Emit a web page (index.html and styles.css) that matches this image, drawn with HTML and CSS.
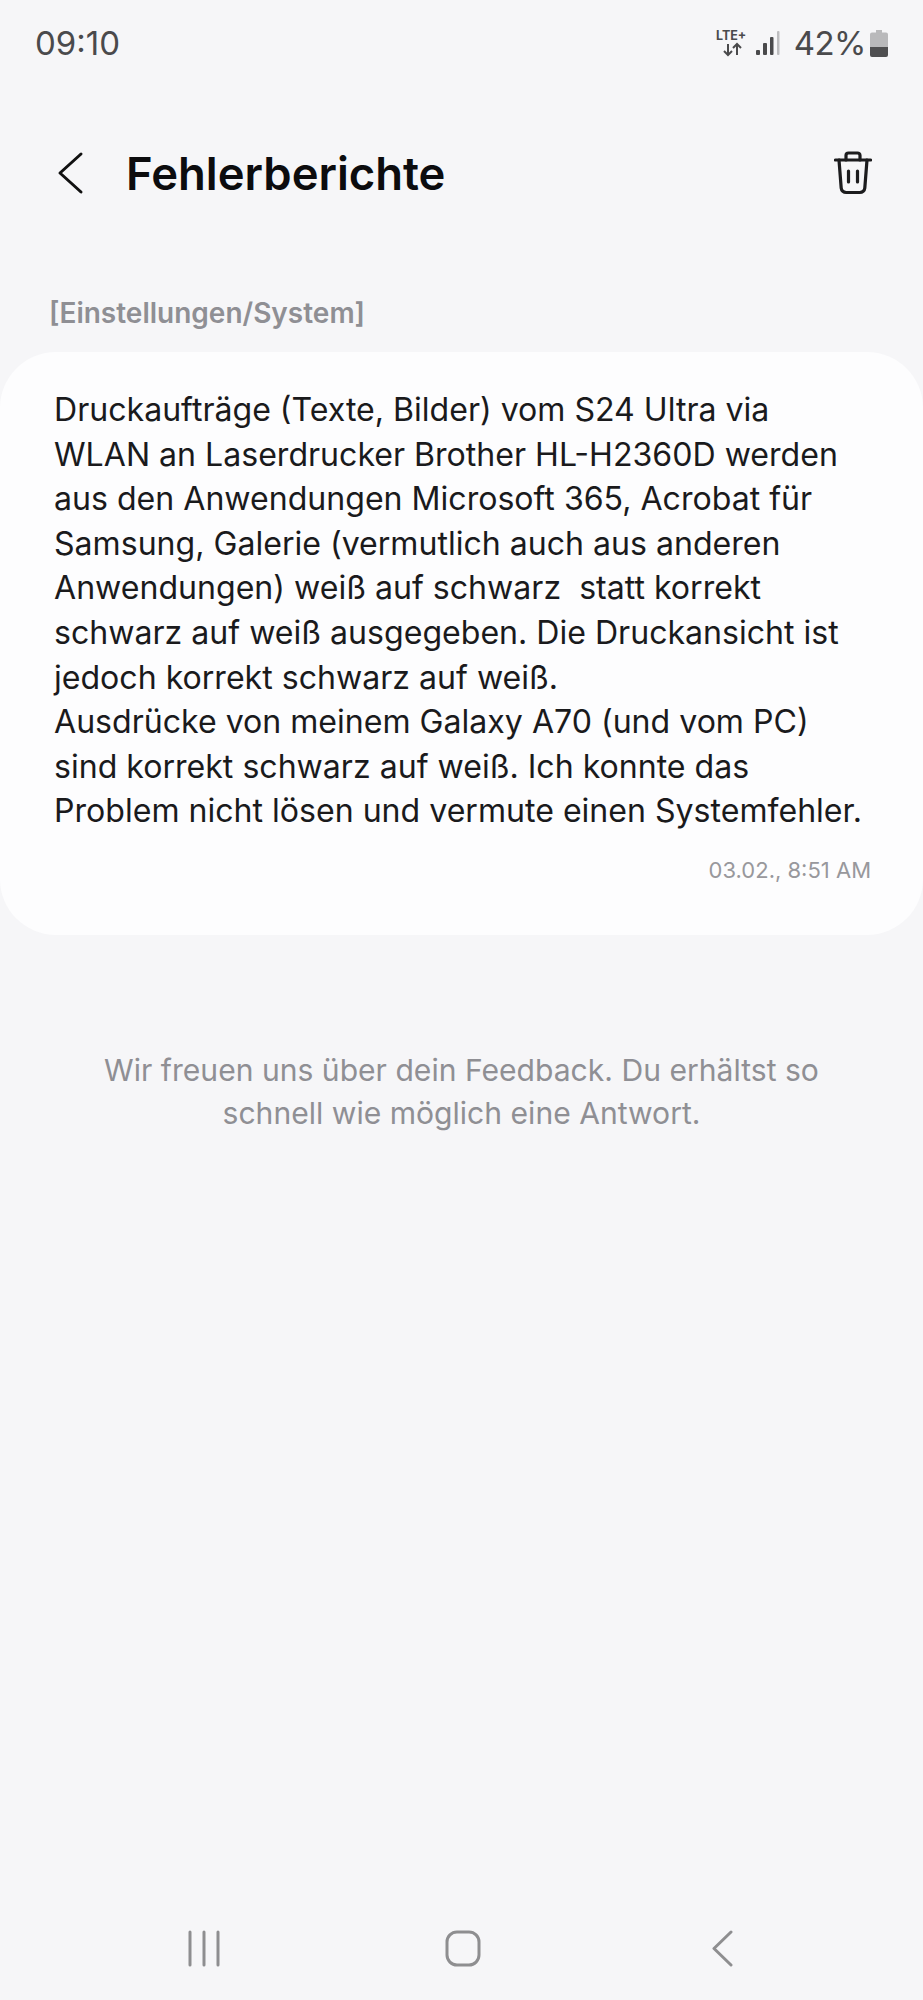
FILE: index.html
```html
<!DOCTYPE html>
<html>
<head>
<link rel="stylesheet" href="styles.css">
</head>
<body>

<div class="screen">
  <div class="status-bar">
    <span class="clock">09:10</span>
    <div class="status-icons">
      <svg class="icon-lte" width="36" height="28" viewBox="0 0 36 28">
        <text x="0" y="11" class="lte-text">LTE+</text>
        <path d="M12 15v11M8 22l4 4 4-4M21 26V15M17 19l4-4 4 4" fill="none" stroke="#4a4a4c" stroke-width="2"/>
      </svg>
      <svg class="icon-signal" width="24" height="25" viewBox="0 0 24 25">
        <rect x="0" y="19" width="4" height="5" rx="1" fill="#4a4a4c"/>
        <rect x="7" y="12" width="4" height="12" rx="1" fill="#4a4a4c"/>
        <rect x="14" y="6" width="3.500" height="18" rx="1" fill="#4a4a4c"/>
        <rect x="21" y="0" width="2.500" height="24" rx="1" fill="#bdbdbf"/>
      </svg>
      <span class="battery-text">42%</span>
      <svg class="icon-battery" width="18" height="27" viewBox="0 0 18 27">
        <path d="M6 0h6v2.500h4a2 2 0 0 1 2 2V17H0V4.500a2 2 0 0 1 2-2h4z" fill="#b9b9bb"/>
        <path d="M0 17h18v8a2 2 0 0 1-2 2H2a2 2 0 0 1-2-2z" fill="#4f4f51"/>
      </svg>
    </div>
  </div>

  <div class="app-bar">
    <svg class="back" width="28" height="44" viewBox="0 0 28 44">
      <path d="M24 3L3 22l21 19" fill="none" stroke="#111" stroke-width="3" stroke-linecap="round" stroke-linejoin="round"/>
    </svg>
    <h1 class="title">Fehlerberichte</h1>
    <svg class="trash" width="38" height="44" viewBox="0 0 38 44">
      <g fill="none" stroke="#1c1c1e" stroke-width="3.200" stroke-linecap="round" stroke-linejoin="round">
        <path d="M1.500 9h35"/>
        <path d="M12 9V4.500a2.500 2.500 0 0 1 2.500-2.500h9a2.500 2.500 0 0 1 2.500 2.500V9"/>
        <path d="M5 9l2.200 28a5 5 0 0 0 5 4.500h13.600a5 5 0 0 0 5-4.500L33 9"/>
        <path d="M14.500 20v11M23.500 20v11"/>
      </g>
    </svg>
  </div>

  <div class="category">[Einstellungen/System]</div>

  <div class="card">
    <p class="message">Druckaufträge (Texte, Bilder) vom S24 Ultra via<br>
WLAN an Laserdrucker Brother HL-H2360D werden<br>
aus den Anwendungen Microsoft 365, Acrobat für<br>
Samsung, Galerie (vermutlich auch aus anderen<br>
Anwendungen) weiß auf schwarz&nbsp; statt korrekt<br>
schwarz auf weiß ausgegeben. Die Druckansicht ist<br>
jedoch korrekt schwarz auf weiß.<br>
Ausdrücke von meinem Galaxy A70 (und vom PC)<br>
sind korrekt schwarz auf weiß. Ich konnte das<br>
Problem nicht lösen und vermute einen Systemfehler.</p>
    <div class="stamp">03.02., 8:51 AM</div>
  </div>

  <p class="note">Wir freuen uns über dein Feedback. Du erhältst so<br>schnell wie möglich eine Antwort.</p>

  <div class="nav-bar">
    <svg width="34" height="37" viewBox="0 0 34 37">
      <path d="M3 2v33M17 2v33M31 2v33" fill="none" stroke="#8e8e90" stroke-width="3" stroke-linecap="round"/>
    </svg>
    <svg width="36" height="37" viewBox="0 0 36 37">
      <rect x="2" y="2" width="32" height="33" rx="10" fill="none" stroke="#8e8e90" stroke-width="3"/>
    </svg>
    <svg width="22" height="37" viewBox="0 0 22 37">
      <path d="M20 2L3 18.500 20 35" fill="none" stroke="#8e8e90" stroke-width="3" stroke-linecap="round" stroke-linejoin="round"/>
    </svg>
  </div>
</div>

</body>
</html>
```

FILE: styles.css
```css
* {
    box-sizing: border-box;
}

body {
    margin: 0;
    background-color: #f6f6f8;
    font-family: Inter, "Noto Sans", sans-serif;
}

.screen {
    display: flex;
    flex-direction: column;
    height: 2000px;
    overflow: hidden;
}

.status-bar {
    display: flex;
    justify-content: space-between;
    align-items: center;
    height: 86px;
    padding: 0 35px;
    color: #4a4a4c;
}

.clock {
    font-size: 33px;
}

.status-icons {
    display: flex;
    align-items: center;
}

.lte-text {
    font-size: 12.500px;
    font-weight: 700;
    fill: #4a4a4c;
}

.icon-signal {
    margin-left: 4px;
}

.battery-text {
    font-size: 33px;
    letter-spacing: -0.500px;
    margin-left: 14px;
}

.icon-battery {
    margin-left: 4px;
}

.app-bar {
    display: flex;
    align-items: center;
    height: 66px;
    margin-top: 54px;
    padding: 0 51px 0 57px;
}

.title {
    flex: 1;
    margin: 0 0 0 41px;
    font-size: 45.400px;
    font-weight: 600;
    color: #0c0c0e;
}

.category {
    margin-top: 90px;
    padding-left: 49px;
    font-size: 28px;
    line-height: 34px;
    font-weight: 600;
    color: #8f8f94;
}

.card {
    height: 583px;
    margin-top: 22px;
    padding: 36px 52px 0 54px;
    background-color: #fdfdfe;
    border-radius: 56px;
}

.message {
    margin: 0;
    font-size: 32.100px;
    line-height: 44.600px;
    color: #1a1a1c;
    white-space: nowrap;
}

.stamp {
    margin-top: 20px;
    text-align: right;
    font-size: 22px;
    line-height: 32px;
    color: #98989c;
}

.note {
    margin: 114px 0 0;
    text-align: center;
    font-size: 30.100px;
    line-height: 43px;
    color: #8f8f94;
}

.nav-bar {
    display: grid;
    grid-template-columns: repeat(3, 259px);
    justify-content: center;
    justify-items: center;
    align-items: center;
    margin-top: auto;
    height: 38px;
    padding-left: 3px;
    margin-bottom: 33px;
}
```
